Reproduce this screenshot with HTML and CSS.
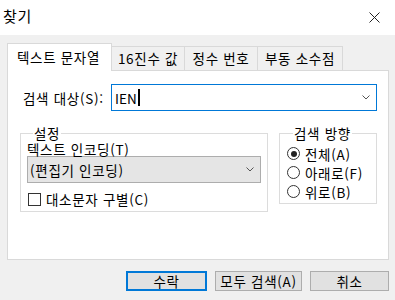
FILE: index.html
```html
<!DOCTYPE html>
<html lang="ko">
<head>
    <meta charset="UTF-8">
    <title>찾기</title>
    <link rel="stylesheet" href="styles.css">
</head>
<body>

    <div class="titlebar">
        <span class="title">찾기</span>
        <svg class="close" width="11" height="11" viewBox="0 0 11 11">
            <path d="M0.5 0.5 L10.5 10.5 M10.5 0.5 L0.5 10.5" stroke="#222" stroke-width="1" fill="none"/>
        </svg>
    </div>

    <div class="dialog">
        <div class="tabs">
            <div class="tab active">텍스트 문자열</div>
            <div class="tab">16진수 값</div>
            <div class="tab">정수 번호</div>
            <div class="tab wide">부동 소수점</div>
        </div>

        <div class="panel">
            <div class="search-row">
                <label class="search-label">검색 대상(S):</label>
                <div class="field">
                    <span class="value">IEN</span><span class="caret"></span>
                    <svg class="chevron" width="8" height="5" viewBox="0 0 8 5">
                        <path d="M0.5 0.5 L4 4 L7.5 0.5" stroke="#555" fill="none"/>
                    </svg>
                </div>
            </div>

            <div class="groups">
                <fieldset class="group settings">
                    <legend>설정</legend>
                    <div class="combo-label">텍스트 인코딩(T)</div>
                    <div class="combo">
                        <span>(편집기 인코딩)</span>
                        <svg class="chevron" width="8" height="5" viewBox="0 0 8 5">
                            <path d="M0.5 0.5 L4 4 L7.5 0.5" stroke="#555" fill="none"/>
                        </svg>
                    </div>
                    <div class="check-row">
                        <span class="checkbox"></span>
                        <span>대소문자 구별(C)</span>
                    </div>
                </fieldset>

                <fieldset class="group direction">
                    <legend>검색 방향</legend>
                    <div class="radio-row"><span class="radio checked"></span>전체(A)</div>
                    <div class="radio-row"><span class="radio"></span>아래로(F)</div>
                    <div class="radio-row"><span class="radio"></span>위로(B)</div>
                </fieldset>
            </div>
        </div>

        <div class="buttons">
            <button class="btn default">수락</button>
            <button class="btn wide">모두 검색(A)</button>
            <button class="btn narrow">취소</button>
        </div>
    </div>

</body>
</html>
```

FILE: styles.css
```css
body {
    margin: 0;
    width: 395px;
    height: 300px;
    background-color: #f0f0f0;
    font-family: "Noto Sans CJK KR", "Noto Sans", sans-serif;
    font-size: 13.5px;
    letter-spacing: 0.7px;
    color: #000;
    overflow: hidden;
}
.titlebar {
    height: 35px;
    background-color: #fff;
    display: flex;
    align-items: center;
    justify-content: space-between;
    padding: 0 15px 0 3px;
}
.title {
    font-size: 15px;
    line-height: 20px;
    margin-top: -3px;
}
.close {
    margin-top: -1px;
}
.dialog {
    padding: 8px 6px 0 7px;
}
.tabs {
    display: flex;
    align-items: flex-end;
    height: 27px;
}
.tab {
    width: 74px;
    height: 24px;
    line-height: 22px;
    text-align: center;
    border: 1px solid #d9d9d9;
    border-bottom: none;
    margin-left: -1px;
    box-sizing: border-box;
    background-color: #f0f0f0;
}
.tab.wide {
    width: 86px;
}
.tab.active {
    position: relative;
    z-index: 1;
    width: 105px;
    height: 28px;
    margin-bottom: -1px;
    margin-left: 0;
    padding-right: 2px;
    line-height: 26px;
    background-color: #fff;
}
.panel {
    height: 190px;
    box-sizing: border-box;
    background-color: #fff;
    border: 1px solid #d9d9d9;
    padding: 13px 11px 0 12px;
}
.search-row {
    display: flex;
    align-items: center;
}
.search-label {
    width: 91px;
    padding-left: 3px;
    box-sizing: border-box;
}
.field {
    flex: 1;
    height: 27px;
    box-sizing: border-box;
    border: 1px solid #0078d7;
    display: flex;
    align-items: center;
    padding: 0 4px 0 3px;
}
.field .value {
    letter-spacing: 0;
}
.caret {
    width: 2px;
    height: 17px;
    background-color: #000;
    margin-left: 1px;
}
.field .chevron {
    margin-left: auto;
    margin-right: 2px;
}
.groups {
    display: flex;
    align-items: flex-start;
    gap: 11px;
    margin-top: 15px;
}
.group {
    margin: 0;
    border: 1px solid #dcdcdc;
    min-width: 0;
    box-sizing: border-box;
}
.group legend {
    padding: 0 1px;
    margin-left: 6px;
    line-height: 14px;
}
.settings {
    width: 248px;
    height: 86px;
    padding: 0 6px;
}
.combo-label {
    line-height: 14px;
    padding-top: 2px;
}
.combo {
    height: 27px;
    box-sizing: border-box;
    background-color: #e5e5e5;
    border: 1px solid #adadad;
    display: flex;
    align-items: center;
    justify-content: space-between;
    padding: 0 6px 0 2px;
}
.check-row {
    display: flex;
    align-items: center;
    margin-top: 8px;
    line-height: 16px;
}
.checkbox {
    width: 11px;
    height: 11px;
    border: 1px solid #333;
    margin: 0 5px 0 1px;
}
.direction {
    width: 98px;
    height: 78px;
    padding: 4px 4px 0 7px;
}
.radio-row {
    display: flex;
    align-items: center;
    height: 19px;
}
.radio {
    flex: none;
    width: 11px;
    height: 11px;
    border: 1px solid #333;
    border-radius: 50%;
    margin-right: 5px;
    display: flex;
    align-items: center;
    justify-content: center;
}
.radio.checked::after {
    content: "";
    width: 6px;
    height: 6px;
    border-radius: 50%;
    background-color: #222;
}
.buttons {
    display: flex;
    justify-content: flex-end;
    gap: 8px;
    margin-top: 11px;
}
.btn {
    height: 20px;
    width: 81px;
    padding: 0;
    font-family: inherit;
    font-size: 13.5px;
    letter-spacing: 0.7px;
    line-height: 17px;
    background-color: #e1e1e1;
    border: 1px solid #adadad;
    color: #000;
}
.btn.default {
    border: 2px solid #0078d7;
}
.btn.wide {
    width: 87px;
}
.btn.narrow {
    width: 79px;
}
```
